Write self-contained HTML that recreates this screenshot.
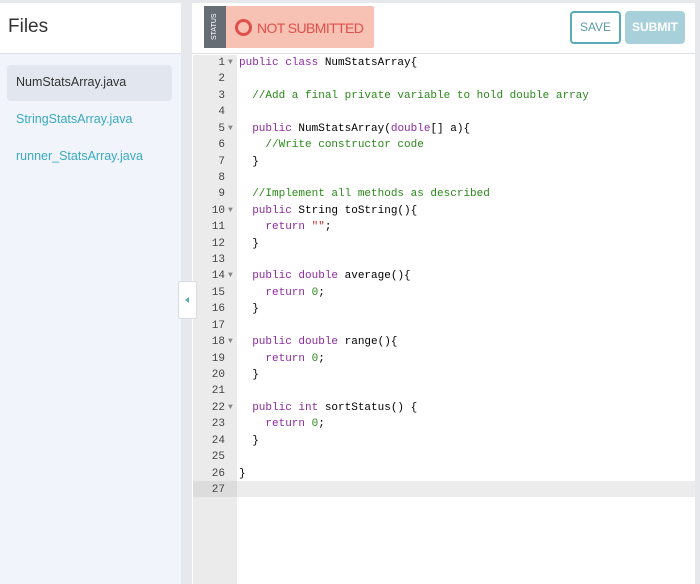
<!DOCTYPE html>
<html><head><style>
*{margin:0;padding:0;box-sizing:border-box}
body{width:700px;height:584px;background:#e6e8ec;position:relative;overflow:hidden;font-family:"Liberation Sans",sans-serif}
#left{position:absolute;left:0;top:3px;width:181px;height:581px;background:#f1f5fb}
#lh{height:51px;background:#fff;border-bottom:1px solid #dde1e6;font-size:19px;color:#333;padding:13px 8px}
.f{position:absolute;left:16px;font-size:12.5px;color:#39a9c4}
#sel{position:absolute;left:7px;top:62px;width:165px;height:36px;background:#e2e7ef;border-radius:4px}
#right{position:absolute;left:192px;top:3px;width:503px;height:581px;background:#fff}
#hdr{height:51px;border-bottom:1px solid #dde1e6;position:relative}
#status{position:absolute;left:12px;top:3px;width:170px;height:42px;background:#f7c1b4;border-radius:2px}
#stl{position:absolute;left:0;top:0;width:22px;height:42px;background:#676d75;color:#fff;font-size:7px;writing-mode:vertical-rl;transform:rotate(180deg);text-align:center;line-height:22px}
#ring{position:absolute;left:31px;top:13px;width:17px;height:17px;border:3.5px solid #e0504a;border-radius:50%}
#st{position:absolute;left:53px;top:14px;font-size:14px;color:#e0504a;letter-spacing:-0.6px}
#save{position:absolute;left:378px;top:8px;width:51px;height:33px;border:2px solid #5aaab8;border-radius:4px;color:#5a9aa8;font-size:12px;text-align:center;line-height:29px}
#sub{position:absolute;left:433px;top:8px;width:60px;height:33px;background:#a8d0da;border-radius:4px;color:#fff;font-size:12px;font-weight:bold;text-align:center;line-height:33px}
#gut{position:absolute;left:1px;top:52px;width:44px;height:529px;background:#ebebeb}
#hl{position:absolute;left:1px;top:478px;width:502px;height:16px;background:#ececec}
#hl2{position:absolute;left:1px;top:478px;width:44px;height:16px;background:#dcdcdc}
pre{position:absolute;top:52px;font-family:"Liberation Mono",monospace;font-size:11px;line-height:16.42px;color:#000}
#nums{left:0;width:33px;text-align:right;color:#444}
#tg{left:36px;color:#888;font-size:8px}
#code{left:47px}
.k{color:#8e2aa0}.c{color:#2a8a1a}.n{color:#2a8a1a}.s{color:#c03030}
#tog{position:absolute;left:178px;top:281px;width:19px;height:38px;background:#fff;border:1px solid #d8dde3;border-radius:2px}
#tog:after{content:"";position:absolute;left:6px;top:15px;border-right:4px solid #5aaab8;border-top:3px solid transparent;border-bottom:3px solid transparent}
</style></head><body>
<div id="left"><div id="lh">Files</div>
<div id="sel"></div>
<div class="f" style="top:72px;color:#333">NumStatsArray.java</div>
<div class="f" style="top:109px">StringStatsArray.java</div>
<div class="f" style="top:146px">runner_StatsArray.java</div>
</div>
<div id="right">
<div id="hdr">
<div id="status"><div id="stl">STATUS</div><div id="ring"></div><div id="st">NOT SUBMITTED</div></div>
<div id="save">SAVE</div><div id="sub">SUBMIT</div>
</div>
<div id="gut"></div>
<div id="hl"></div><div id="hl2"></div>
<pre id="nums">1
2
3
4
5
6
7
8
9
10
11
12
13
14
15
16
17
18
19
20
21
22
23
24
25
26
27</pre>
<pre id="tg">▼



▼




▼



▼



▼



▼</pre>
<pre id="code"><span class="k">public class</span> NumStatsArray{

  <span class="c">//Add a final private variable to hold double array</span>

  <span class="k">public</span> NumStatsArray(<span class="k">double</span>[] a){
    <span class="c">//Write constructor code</span>
  }

  <span class="c">//Implement all methods as described</span>
  <span class="k">public</span> String toString(){
    <span class="k">return</span> <span class="s">""</span>;
  }

  <span class="k">public double</span> average(){
    <span class="k">return</span> <span class="n">0</span>;
  }

  <span class="k">public double</span> range(){
    <span class="k">return</span> <span class="n">0</span>;
  }

  <span class="k">public int</span> sortStatus() {
    <span class="k">return</span> <span class="n">0</span>;
  }

}
</pre>
</div>
<div id="tog"></div>
</body></html>
